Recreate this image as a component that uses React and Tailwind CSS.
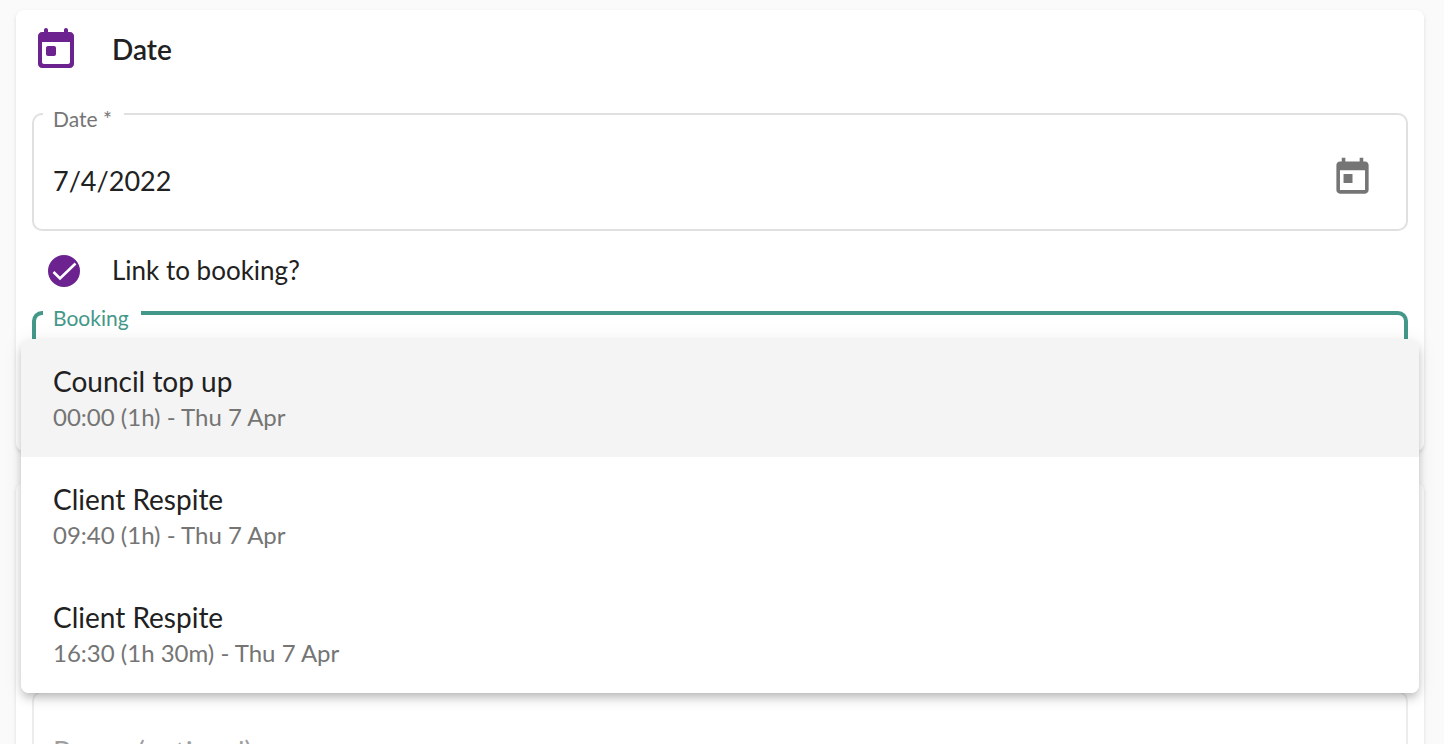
import { useState } from "react";

const bookings = [
  { id: 1, title: "Council top up", time: "00:00 (1h) - Thu 7 Apr" },
  { id: 2, title: "Client Respite", time: "09:40 (1h) - Thu 7 Apr" },
  { id: 3, title: "Client Respite", time: "16:30 (1h 30m) - Thu 7 Apr" },
];

function CalendarIcon({ rounded, className }) {
  return (
    <svg viewBox="0 0 24 24" fill="currentColor" className={className} aria-hidden="true">
      {rounded ? (
        <>
          <path d="M19 3h-1V2c0-.55-.45-1-1-1s-1 .45-1 1v1H8V2c0-.55-.45-1-1-1s-1 .45-1 1v1H5c-1.1 0-2 .9-2 2v14c0 1.1.9 2 2 2h14c1.1 0 2-.9 2-2V5c0-1.1-.9-2-2-2zm-1 16H6c-.55 0-1-.45-1-1V8h14v10c0 .55-.45 1-1 1z" />
          <rect x="7" y="10" width="5" height="5" rx="1" />
        </>
      ) : (
        <path d="M19 3h-1V1h-2v2H8V1H6v2H5c-1.11 0-1.99.9-1.99 2L3 19c0 1.1.89 2 2 2h14c1.1 0 2-.9 2-2V5c0-1.1-.9-2-2-2zm0 16H5V8h14v11zM7 10h5v5H7z" />
      )}
    </svg>
  );
}

export default function App() {
  const [date, setDate] = useState("7/4/2022");
  const [linked, setLinked] = useState(true);
  const [active, setActive] = useState(1);

  return (
    <main className="h-screen overflow-hidden bg-[#fafafa] px-4 pr-5 pt-[10px] font-['Lato','Open_Sans',sans-serif] text-[#212121]">
      <section className="rounded-lg bg-white px-4 pt-4 pb-5 shadow-[0_2px_4px_rgba(0,0,0,0.12)]">
        <header className="flex h-12 items-center gap-8 text-[#6c2390]">
          <CalendarIcon rounded className="size-12" />
          <h2 className="pb-0.5 text-[28px] leading-9 font-semibold text-[#212121]">Date</h2>
        </header>

        <fieldset className="mt-[22px] rounded-[10px] border-2 border-[#e0e0e0] pr-8 pl-[9px]">
          <legend className="pt-[11px] pr-3 pb-px pl-[10px] text-[21px] leading-6 text-[#757575]">
            <label htmlFor="date">Date *</label>
          </legend>
          <div className="flex h-[97px] items-center">
            <input
              id="date"
              value={date}
              onChange={(e) => setDate(e.target.value)}
              className="min-w-0 flex-1 px-[10px] text-[27px] leading-9 outline-none"
            />
            <button type="button" aria-label="Open calendar" className="pb-1.5 text-[#757575]">
              <CalendarIcon className="size-[43px]" />
            </button>
          </div>
        </fieldset>

        <div className="flex h-20 items-center gap-8 pl-4">
          <span className="relative size-8">
            <input
              id="link"
              type="checkbox"
              checked={linked}
              onChange={(e) => setLinked(e.target.checked)}
              className="block size-8 appearance-none rounded-full border-2 border-[#6c2390] checked:bg-[#6c2390]"
            />
            {linked && (
              <svg viewBox="0 0 32 32" className="pointer-events-none absolute inset-0 size-8" fill="none" stroke="white" strokeWidth="2.6" aria-hidden="true">
                <path d="M5.5 17l6.5 6.5L27.5 8.5" />
              </svg>
            )}
          </span>
          <label htmlFor="link" className="pb-0.5 text-[26px] leading-8">Link to booking?</label>
        </div>

        <div className="relative -mt-4">
          <fieldset className="rounded-[10px] border-4 border-[#439889] pl-[7px]">
            <legend className="pt-[11px] pr-3 pb-px pl-[10px] text-[21px] leading-6 text-[#439889]">
              <label htmlFor="booking">Booking</label>
            </legend>
            <input id="booking" role="combobox" aria-expanded="true" aria-controls="bookings" className="h-24 w-full px-[10px] text-[27px] outline-none" />
          </fieldset>

          <ul
            id="bookings"
            className="absolute top-11 -right-[11px] -left-[11px] z-10 overflow-hidden rounded-lg bg-white shadow-[0_4px_8px_-2px_rgba(0,0,0,0.2),0_8px_10px_rgba(0,0,0,0.08),0_2px_20px_rgba(0,0,0,0.08)]"
          >
            {bookings.map((b) => (
              <li key={b.id}>
                <button
                  type="button"
                  onMouseEnter={() => setActive(b.id)}
                  className={`flex h-[118px] w-full flex-col justify-center px-8 pt-0.5 text-left ${active === b.id ? "bg-[#f4f4f4]" : "bg-white"}`}
                >
                  <span className="text-[28px] leading-9">{b.title}</span>
                  <span className="text-[24px] leading-9 text-[#757575]">{b.time}</span>
                </button>
              </li>
            ))}
          </ul>
        </div>
      </section>

      <section className="mt-8 rounded-lg bg-white px-4 pt-[208px] pb-5 shadow-[0_2px_4px_rgba(0,0,0,0.12)]">
        <div className="rounded-[10px] border-2 border-[#ececec] px-[19px] pt-10 pb-11">
          <input aria-label="Bonus (optional)" placeholder="Bonus (optional)" className="w-full text-[28px] leading-9 outline-none placeholder:text-[#9e9e9e]" />
        </div>
      </section>
    </main>
  );
}
